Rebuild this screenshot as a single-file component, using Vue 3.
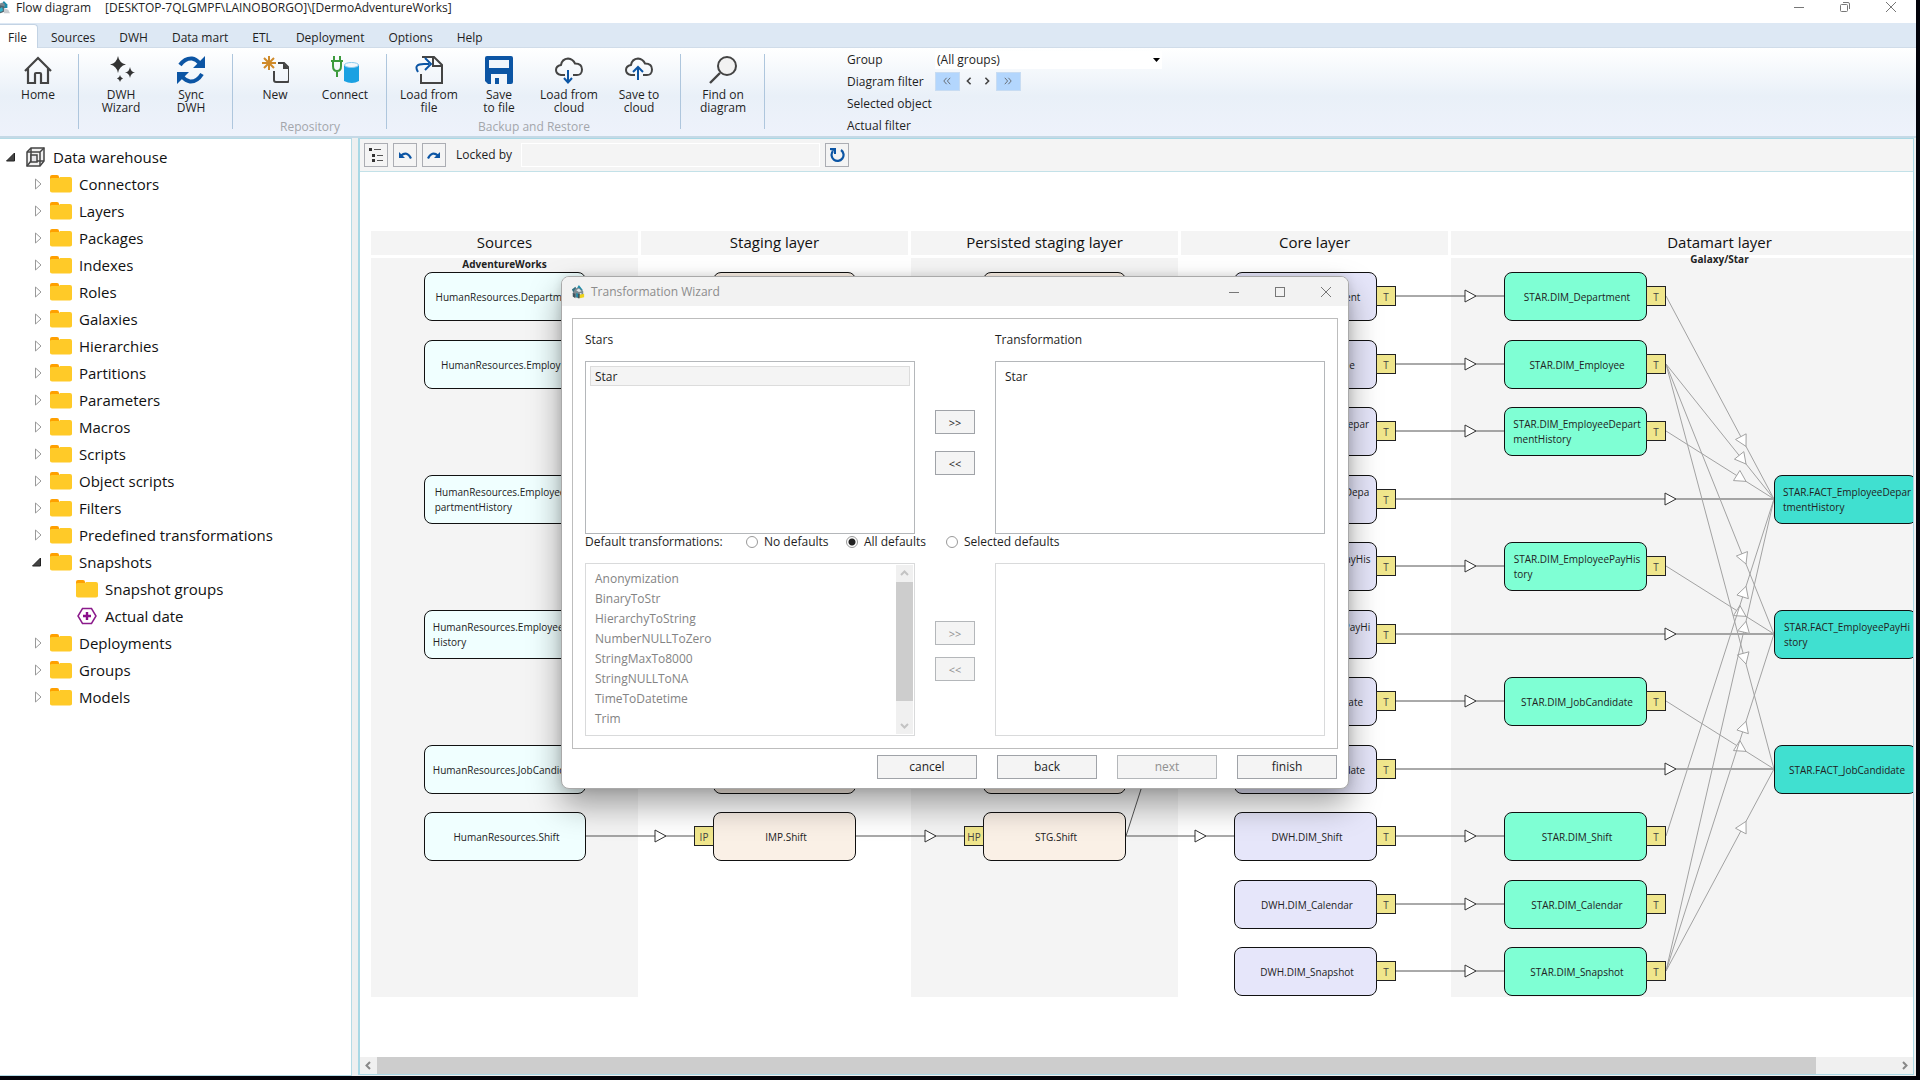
<script setup>
import { ref } from 'vue'

const tabs = ['File', 'Sources', 'DWH', 'Data mart', 'ETL', 'Deployment', 'Options', 'Help']

const ribbon = [
  { caption: '', items: [{ icon: 'home', lines: ['Home'] }] },
  { caption: '', items: [{ icon: 'wizard', lines: ['DWH', 'Wizard'] }, { icon: 'sync', lines: ['Sync', 'DWH'] }] },
  { caption: 'Repository', items: [{ icon: 'new', lines: ['New'] }, { icon: 'connect', lines: ['Connect'] }] },
  {
    caption: 'Backup and Restore',
    items: [
      { icon: 'load', lines: ['Load from', 'file'] },
      { icon: 'save', lines: ['Save', 'to file'] },
      { icon: 'clouddown', lines: ['Load from', 'cloud'] },
      { icon: 'cloudup', lines: ['Save to', 'cloud'] },
    ],
  },
  { caption: '', items: [{ icon: 'find', lines: ['Find on', 'diagram'] }] },
]

const tree = [
  { label: 'Data warehouse', level: 0, state: 'open', icon: 'cube' },
  ...['Connectors', 'Layers', 'Packages', 'Indexes', 'Roles', 'Galaxies', 'Hierarchies', 'Partitions', 'Parameters',
    'Macros', 'Scripts', 'Object scripts', 'Filters', 'Predefined transformations']
    .map((label) => ({ label, level: 1, state: 'closed', icon: 'folder' })),
  { label: 'Snapshots', level: 1, state: 'open', icon: 'folder' },
  { label: 'Snapshot groups', level: 2, state: '', icon: 'folder' },
  { label: 'Actual date', level: 2, state: '', icon: 'date' },
  ...['Deployments', 'Groups', 'Models'].map((label) => ({ label, level: 1, state: 'closed', icon: 'folder' })),
]

const layers = [
  { title: 'Sources', sub: 'AdventureWorks', shaded: true },
  { title: 'Staging layer', sub: '', shaded: false },
  { title: 'Persisted staging layer', sub: '', shaded: true },
  { title: 'Core layer', sub: '', shaded: false },
  { title: 'Datamart layer', sub: 'Galaxy/Star', shaded: true, wide: true },
]

/* Node geometry on the board: left edge and width per kind, row pitch 67.5 */
const kinds = {
  src: { x: 53, w: 162 },
  imp: { x: 342, w: 143, tag: 'IP' },
  stg: { x: 612, w: 143, tag: 'HP' },
  dwh: { x: 863, w: 143, tag: 'T' },
  dim: { x: 1133, w: 143, tag: 'T' },
  fact: { x: 1403, w: 143 },
}
const rowTop = (row) => Math.round(41 + 67.5 * row)
const rowMid = (row) => rowTop(row) + 24

const nodeList = {
  src: {
    0: ['HumanResources.Department'], 1: ['HumanResources.Employee'],
    3: ['HumanResources.EmployeeDe', 'partmentHistory'], 5: ['HumanResources.EmployeePay', 'History'],
    7: ['HumanResources.JobCandidate'], 8: ['HumanResources.Shift'],
  },
  imp: {
    0: ['IMP.Department'], 1: ['IMP.Employee'], 3: ['IMP.EmployeeDepartment', 'History'],
    5: ['IMP.EmployeePayHistory'], 7: ['IMP.JobCandidate'], 8: ['IMP.Shift'],
  },
  stg: {
    0: ['STG.Department'], 1: ['STG.Employee'], 3: ['STG.EmployeeDepartment', 'History'],
    5: ['STG.EmployeePayHistory'], 7: ['STG.JobCandidate'], 8: ['STG.Shift'],
  },
  dwh: {
    0: ['DWH.DIM_Department'], 1: ['DWH.DIM_Employee'], 2: ['DWH.DIM_EmployeeDepar', 'tmentHistory'],
    3: ['DWH.FACT_EmployeeDepa', 'rtmentHistory'], 4: ['DWH.DIM_EmployeePayHis', 'tory'],
    5: ['DWH.FACT_EmployeePayHi', 'story'], 6: ['DWH.DIM_JobCandidate'], 7: ['DWH.FACT_JobCandidate'],
    8: ['DWH.DIM_Shift'], 9: ['DWH.DIM_Calendar'], 10: ['DWH.DIM_Snapshot'],
  },
  dim: {
    0: ['STAR.DIM_Department'], 1: ['STAR.DIM_Employee'], 2: ['STAR.DIM_EmployeeDepart', 'mentHistory'],
    4: ['STAR.DIM_EmployeePayHis', 'tory'], 6: ['STAR.DIM_JobCandidate'], 8: ['STAR.DIM_Shift'],
    9: ['STAR.DIM_Calendar'], 10: ['STAR.DIM_Snapshot'],
  },
  fact: {
    3: ['STAR.FACT_EmployeeDepar', 'tmentHistory'], 5: ['STAR.FACT_EmployeePayHi', 'story'],
    7: ['STAR.FACT_JobCandidate'],
  },
}
const nodes = Object.entries(nodeList).flatMap(([kind, rows]) =>
  Object.entries(rows).map(([row, lines]) => {
    const k = kinds[kind]
    const left = kind === 'imp' || kind === 'stg'
    return { kind, lines, x: k.x, w: k.w, y: rowTop(+row), tag: k.tag, tagX: left ? k.x - 19 : k.x + k.w - 1 }
  }),
)

const edge = (x1, r1, x2, r2, back = 28, soft = false) => {
  const y1 = rowMid(r1)
  const y2 = rowMid(r2)
  const len = Math.hypot(x2 - x1, y2 - y1)
  const ux = (x2 - x1) / len
  const uy = (y2 - y1) / len
  const d = back / ux
  const tx = x2 - ux * d
  const ty = y2 - uy * d
  const bx = tx - ux * 11
  const by = ty - uy * 11
  const arrow = `${tx},${ty} ${bx - uy * 6},${by + ux * 6} ${bx + uy * 6},${by - ux * 6}`
  return { x1, y1, x2, y2, arrow, soft }
}
const edges = [
  edge(215, 8, 323, 8), edge(485, 8, 593, 8), edge(755, 8, 863, 8),
  ...[0, 1, 2, 4, 6, 8, 9, 10].map((r) => edge(1025, r, 1133, r)),
  ...[3, 5, 7].map((r) => edge(1025, r, 1403, r, 98)),
  ...[[0, 3], [1, 3], [2, 3], [1, 5], [1, 7], [4, 5], [6, 7], [8, 3], [10, 3], [10, 5], [10, 7]]
    .map(([a, b]) => edge(1295, a, 1403, b, 28, true)),
  edge(755, 8, 863, 3),
]

const defaults = ref('all')
const transformations = ['Anonymization', 'BinaryToStr', 'HierarchyToString', 'NumberNULLToZero', 'StringMaxTo8000',
  'StringNULLToNA', 'TimeToDatetime', 'Trim']
</script>

<template>
  <div class="screen">
    <div class="app">
      <header class="titlebar">
        <svg class="app-icon" viewBox="0 0 16 16"><path d="M6 5 9 1l4 4v4H6z" fill="#1c8ba8" /><circle cx="7" cy="6" r="3" fill="#7d8b94" /><path d="M1 9l3-3 5 1 1 6-5 2-4-2z" fill="#52656f" /><path d="M4 10l3-2 1 4-3 2z" fill="#35b4cc" /><path d="M9 15V9l5 2 2 4z" fill="#c8ccd0" /></svg>
        <span>Flow diagram</span>
        <span class="path">[DESKTOP-7QLGMPF\LAINOBORGO]\[DermoAdventureWorks]</span>
        <div class="winbtns">
          <button aria-label="Minimize"><svg viewBox="0 0 12 12"><path d="M1 6.500h10" /></svg></button>
          <button aria-label="Restore"><svg viewBox="0 0 12 12"><rect x="1.500" y="3.500" width="7" height="7" rx="1" /><path d="M4 1.500h5q1.500 0 1.500 1.500v5" /></svg></button>
          <button aria-label="Close"><svg viewBox="0 0 12 12"><path d="M1 1l10 10M11 1 1 11" /></svg></button>
        </div>
      </header>

      <nav class="tabs">
        <button v-for="(t, i) in tabs" :key="t" :class="{ active: i === 0 }">{{ t }}</button>
      </nav>

      <section class="ribbon">
        <div v-for="(g, gi) in ribbon" :key="gi" class="group">
          <div class="group-items">
            <button v-for="b in g.items" :key="b.icon" class="big">
              <svg v-if="b.icon === 'home'" viewBox="0 0 28 28"><path d="M1 15 14 2l13 13M4 12v15h7v-9q0-1 1-1h4q1 0 1 1v9h7V12" fill="none" stroke="#444" stroke-width="2.200" /></svg>
              <svg v-else-if="b.icon === 'wizard'" viewBox="0 0 28 28"><path d="M11 0q1.200 7 8 8.500-6.800 1.500-8 8.500-1.200-7-8-8.500Q9.800 7 11 0zM23 11q.8 5 5 5.500-4.200.5-5 5.500-.8-5-5-5.500 4.200-.5 5-5.500zM13 19q.5 3 3 3.500-2.500.5-3 3.500-.5-3-3-3.500 2.500-.5 3-3.500z" fill="#333" /></svg>
              <svg v-else-if="b.icon === 'sync'" viewBox="0 0 28 28"><g fill="none" stroke="#0c55a4" stroke-width="4"><path d="M3 9Q8 2 15 2.500q4 .5 8 5M25 18q-5 8-12 7.500-4-.5-8-5" /></g><path d="M28 0v12H16zM0 28V16h12z" fill="#0c55a4" /></svg>
              <svg v-else-if="b.icon === 'new'" viewBox="0 0 28 28"><path d="M8 0v14M1 7h14M3 2l10 10M13 2 3 12" stroke="#cf8a2a" stroke-width="2" /><path d="M17 7h6l5 5v12q0 2-2 2H15q-2 0-2-2v-9" fill="none" stroke="#444" stroke-width="2" /><path d="M22 7v6h6z" fill="#444" /></svg>
              <svg v-else-if="b.icon === 'connect'" viewBox="0 0 28 28"><path d="M3 0v5M9 0v5M0 5h12M2 5v5q0 5 4 5t4-5V5M6 15v6" fill="none" stroke="#3c9a3c" stroke-width="2" /><path d="M13 9q7-4 15 0v16q-7 4-15 0z" fill="#1ba1e2" /><ellipse cx="20.500" cy="9" rx="7" ry="2.500" fill="#f4f8fc" stroke="#8ccbee" /></svg>
              <svg v-else-if="b.icon === 'load'" viewBox="0 0 28 28"><path d="M7 1h12l8 8v18H6V18M18 1v9h9" fill="none" stroke="#444" stroke-width="2" /><path d="M3 16q-5-8 6-8h5M10 2l6 6-6 6" fill="none" stroke="#0c55a4" stroke-width="2" /></svg>
              <svg v-else-if="b.icon === 'save'" viewBox="0 0 28 28"><path d="M2 0h24q2 0 2 2v24q0 2-2 2H3l-3-3V2q0-2 2-2z" fill="#0c55a4" /><path d="M4 4h20v8H4zM6 18h16v10H6z" fill="#f2f6fb" /><path d="M10 22h4v6h-4z" fill="#0c55a4" /></svg>
              <svg v-else-if="b.icon.startsWith('cloud')" viewBox="0 0 28 28"><path d="M10 19H6q-5-1-5-5t5-5q1-6 7-6.500 5 .5 7 5 7 0 7 6t-6 5.500h-3" fill="none" stroke="#444" stroke-width="2" /><path v-if="b.icon === 'clouddown'" d="M13 14v12M9 22l4 4.500 4-4.500" fill="none" stroke="#0c55a4" stroke-width="2" /><path v-else d="M13 24V11M8 16l5-5 5 5" fill="none" stroke="#0c55a4" stroke-width="2" /></svg>
              <svg v-else viewBox="0 0 28 28"><circle cx="18" cy="10" r="9" fill="#f2f2f2" stroke="#444" stroke-width="2" /><path d="M11 17 1 27" stroke="#444" stroke-width="2.400" /></svg>
              <span v-for="l in b.lines" :key="l">{{ l }}</span>
            </button>
          </div>
          <div class="caption">{{ g.caption }}</div>
        </div>

        <div class="filters">
          <label for="group">Group</label>
          <div class="combo">
            <select id="group"><option>(All groups)</option></select>
            <svg viewBox="0 0 8 4"><path d="M0 0h7L3.500 4z" /></svg>
          </div>
          <span>Diagram filter</span>
          <div class="steps">
            <button class="hot" aria-label="First"><svg viewBox="0 0 12 10"><path d="M5.500 1 2 5l3.500 4M10 1 6.500 5 10 9" /></svg></button>
            <button aria-label="Previous"><svg viewBox="0 0 12 10" class="bold"><path d="M8 1 4 5l4 4" /></svg></button>
            <button aria-label="Next"><svg viewBox="0 0 12 10" class="bold"><path d="M4 1l4 4-4 4" /></svg></button>
            <button class="hot" aria-label="Last"><svg viewBox="0 0 12 10"><path d="M2 1l3.500 4L2 9M6.500 1 10 5 6.500 9" /></svg></button>
          </div>
          <span>Selected object</span><span></span>
          <span>Actual filter</span><span></span>
        </div>
      </section>

      <main class="work">
        <aside class="tree">
          <ul>
            <li v-for="n in tree" :key="n.label" :class="'level' + n.level">
              <svg class="twist" viewBox="0 0 24 24"><path v-if="n.state === 'open'" d="M14.500 8v8h-8z" fill="#444" stroke="#222" /><path v-else-if="n.state === 'closed'" d="M9.500 7v10l5.500-5z" fill="#fff" stroke="#999" /></svg>
              <svg v-if="n.icon === 'folder'" class="ticon" viewBox="0 0 22 18"><path d="M0 6V2q0-2 2-2h5q2 0 2 2v4z" fill="#ffa000" /><path d="M0 4q0-1 2-1h7l1-1h10q2 0 2 2v12q0 1-2 1.500H2Q0 17 0 16z" fill="#ffca28" /></svg>
              <svg v-else-if="n.icon === 'cube'" class="ticon cube" viewBox="0 0 22 20"><g fill="#f1f1f1" stroke="#444" stroke-width="1.500"><path d="M3 5 7 1h13v13l-4 5H3z" /><path d="M3 5h13v14M16 5l4-4M7 1v13h13M7 14l-4 5" fill="none" /><path d="M7 8h6v7H7z" fill="#e6e6ea" /></g></svg>
              <svg v-else class="ticon cube" viewBox="0 0 22 20"><path d="M6.500 2.500h9L20 10l-4.500 7.500h-9L2 10z" fill="#fff" stroke="#8b1a8b" stroke-width="1.500" /><path d="M11 6v8M7 10h8" stroke="#8b0f8b" stroke-width="2.400" /></svg>
              <span>{{ n.label }}</span>
            </li>
          </ul>
        </aside>

        <section class="panel">
          <div class="toolbar">
            <button aria-label="Layout"><svg viewBox="0 0 16 16"><path d="M1 1h3v3H1zM4 7h3v3H4zM4 12h3v3H4z" fill="#333" /><path d="M6 2.500h7M9 8.500h6M9 13.500h6" stroke="#555" /></svg></button>
            <button aria-label="Undo"><svg viewBox="0 0 16 16"><path d="M4 8.500q6-5 10 3" fill="none" stroke="#0c55a4" stroke-width="2.200" /><path d="M2 5v6h6z" fill="#0c55a4" /></svg></button>
            <button aria-label="Redo"><svg viewBox="0 0 16 16"><path d="M12 8.500q-6-5-10 3" fill="none" stroke="#0c55a4" stroke-width="2.200" /><path d="M14 5v6H8z" fill="#0c55a4" /></svg></button>
            <label for="locked">Locked by</label>
            <input id="locked" type="text" readonly />
            <button aria-label="Refresh"><svg viewBox="0 0 16 16"><path d="M4 4a6 6 0 1 0 8-1" fill="none" stroke="#0c55a4" stroke-width="2.200" /><path d="M1 1h6v6H5V4L1 3z" fill="#0c55a4" /></svg></button>
          </div>

          <div class="canvas">
            <div class="board">
              <div v-for="l in layers" :key="l.title" class="layer">
                <h2>{{ l.title }}</h2>
                <div :class="['lane', { shaded: l.shaded, wide: l.wide }]">{{ l.sub }}</div>
              </div>
              <svg class="edges" width="1617" height="766">
                <g v-for="(e, i) in edges" :key="i" :class="{ soft: e.soft }">
                  <line :x1="e.x1" :y1="e.y1" :x2="e.x2" :y2="e.y2" />
                  <polygon :points="e.arrow" />
                </g>
              </svg>
              <template v-for="n in nodes" :key="n.kind + n.y">
                <div :class="['node', n.kind]" :style="{ left: n.x + 'px', top: n.y + 'px', width: n.w + 'px' }">
                  <div><template v-for="(l, i) in n.lines" :key="l"><br v-if="i" />{{ l }}</template></div>
                </div>
                <div v-if="n.tag" class="tag" :style="{ left: n.tagX + 'px', top: n.y + 14 + 'px' }">{{ n.tag }}</div>
              </template>
            </div>
          </div>

          <div class="hscroll">
            <svg viewBox="0 0 17 17"><path d="M10 5 6.500 8.500 10 12" /></svg>
            <div class="track"><div class="thumb"></div></div>
            <svg viewBox="0 0 17 17"><path d="M7 5l3.500 3.500L7 12" /></svg>
          </div>
        </section>
      </main>

      <div class="dialog" role="dialog" aria-label="Transformation Wizard">
        <header class="dlg-title">
          <svg class="app-icon" viewBox="0 0 16 16"><path d="M6 5 9 0l4 5v4H6z" fill="#1c8ba8" /><path d="M1 5l4-3 2 4-4 3z" fill="#2f6f80" /><path d="M2 9l3-5 4-1 5 4v6l-6 2-5-2z" fill="#7c8a92" /><path d="M6 6l3-2 3 3-3 1zM10 9h2v2h-2z" fill="#dfe4e7" /><path d="M2 9l3 1v5l-3-2zM8 10h2v5H8z" fill="#41545e" /><path d="M6 9l2 1v4H6z" fill="#1c8ba8" /><path d="M10 15v-4l5-1v4z" fill="#efd41c" /></svg>
          <span>Transformation Wizard</span>
          <div class="winbtns">
            <button aria-label="Minimize"><svg viewBox="0 0 12 12"><path d="M1 6.500h10" /></svg></button>
            <button aria-label="Maximize"><svg viewBox="0 0 12 12"><rect x="1.500" y="1.500" width="9" height="9" /></svg></button>
            <button aria-label="Close"><svg viewBox="0 0 12 12"><path d="M1 1l10 10M11 1 1 11" /></svg></button>
          </div>
        </header>
        <div class="dlg-body">
          <div class="transfer">
            <label for="stars">Stars</label>
            <span></span>
            <label for="picked">Transformation</label>
            <div class="list">
              <select id="stars" multiple><option class="hot">Star</option></select>
            </div>
            <div class="move">
              <button>&gt;&gt;</button>
              <button>&lt;&lt;</button>
            </div>
            <div class="list">
              <select id="picked" multiple><option>Star</option></select>
            </div>
          </div>
          <div class="choices">
            <span>Default transformations:</span>
            <label><input v-model="defaults" type="radio" value="no" />No defaults</label>
            <label><input v-model="defaults" type="radio" value="all" />All defaults</label>
            <label><input v-model="defaults" type="radio" value="selected" />Selected defaults</label>
          </div>
          <div class="transfer off">
            <div class="list">
              <select multiple disabled aria-label="Available transformations">
                <option v-for="t in transformations" :key="t">{{ t }}</option>
              </select>
              <div class="vscroll">
                <svg viewBox="0 0 17 17"><path d="M5 10l3.500-3.500L12 10" /></svg>
                <div class="thumb"></div>
                <svg viewBox="0 0 17 17"><path d="M5 7l3.500 3.500L12 7" /></svg>
              </div>
            </div>
            <div class="move tight">
              <button disabled>&gt;&gt;</button>
              <button disabled>&lt;&lt;</button>
            </div>
            <div class="list"><select multiple disabled aria-label="Selected transformations"></select></div>
          </div>
        </div>
        <footer class="dlg-foot">
          <button>cancel</button>
          <button>back</button>
          <button disabled>next</button>
          <button>finish</button>
        </footer>
      </div>
    </div>
  </div>
</template>

<style>
body {
  margin: 0;
  background: #03030a;
}
</style>

<style scoped>
.screen {
  box-sizing: border-box;
  height: 100vh;
  padding: 0 4px 4px 0;
  background: #03030a;
  font: 12px/16px 'Open Sans', 'Noto Sans', sans-serif;
  color: #1e1e1e;
}
* {
  box-sizing: border-box;
}
button,
select,
input {
  font: inherit;
  color: inherit;
  margin: 0;
  padding: 0;
  border: 0;
  border-radius: 0;
  background: none;
}
.app {
  position: relative;
  display: flex;
  flex-direction: column;
  height: 100%;
  overflow: hidden;
  background: #fff;
}

/* title bar */
.titlebar {
  display: flex;
  height: 23px;
  flex: none;
  padding-right: 18px;
}
.app-icon {
  width: 14px;
  height: 14px;
  flex: none;
}
.titlebar .app-icon {
  margin: 0 6px 0 -4px;
}
.path {
  margin-left: 14px;
}
.winbtns {
  display: flex;
  gap: 33px;
  margin-left: auto;
}
.winbtns button {
  width: 13px;
  height: 13px;
}
.winbtns svg {
  display: block;
  width: 12px;
  height: 12px;
  fill: none;
  stroke: #777;
}

/* ribbon */
.tabs {
  display: flex;
  flex: none;
  gap: 3px;
  height: 25px;
  padding-top: 1px;
  background: #dde8f4;
  border-bottom: 1px solid #d0dce9;
}
.tabs button {
  padding: 3px 11px 0 10px;
  height: 24px;
}
.tabs .active {
  padding: 2px 10px 0 8px;
  background: #fff;
  border: 1px solid #c3d3e4;
  border-width: 1px 1px 0 0;
  border-radius: 0 4px 0 0;
}
.ribbon {
  display: flex;
  flex: none;
  height: 90px;
  padding-top: 6px;
  background: linear-gradient(#fff, #e9f0f8 55%, #eef2fb);
  border-bottom: 2px solid #c5d9e6;
}
.group {
  height: 75px;
  padding: 0 6px 0 7px;
  border-right: 1px solid #aec6dd;
}
.group:first-child {
  padding: 0 5px 0 3px;
}
.group-items {
  display: flex;
  height: 65px;
}
.big {
  display: flex;
  flex-direction: column;
  align-items: center;
  width: 70px;
  padding-top: 2px;
  line-height: 13px;
}
.big svg {
  width: 28px;
  height: 28px;
  margin-bottom: 4px;
}
.caption {
  line-height: 16px;
  text-align: center;
  color: #a3a6ab;
}
.filters {
  display: grid;
  grid-template-columns: 88px auto;
  grid-auto-rows: 22px;
  align-items: center;
  margin: -5px 0 0 82px;
}
.combo {
  display: flex;
  align-items: center;
  width: 227px;
  height: 18px;
  padding-right: 1px;
  background: #fff;
}
.combo select {
  flex: 1;
  appearance: none;
  padding-left: 2px;
}
.combo svg {
  width: 8px;
  height: 4px;
}
.steps {
  display: flex;
  padding-bottom: 2px;
}
.steps button {
  width: 18px;
  height: 19px;
  padding: 0 3px;
}
.steps .hot {
  width: 25px;
  background: #b3d6fd;
  border: 1px solid #c8dcf2;
  padding: 0 5px;
}
.steps svg {
  display: block;
  width: 12px;
  height: 8px;
  fill: none;
  stroke: #555;
}
.steps .bold {
  stroke: #444;
  stroke-width: 2;
}

/* work area */
.work {
  display: flex;
  flex: 1;
  min-height: 0;
  background: #eeeff0;
}
.tree {
  width: 352px;
  flex: none;
  background: #fff;
  border: 1px solid #b5dbe6;
  border-left: 0;
}
.tree ul {
  margin: 0;
  padding: 4px 0 0;
  list-style: none;
}
.tree li {
  display: flex;
  align-items: center;
  height: 27px;
  font-size: 15px;
  color: #111;
}
.level1 {
  padding-left: 26px;
}
.level2 {
  padding-left: 52px;
}
.twist {
  width: 24px;
  height: 24px;
}
.ticon {
  width: 22px;
  height: 18px;
  margin-right: 7px;
}
.cube {
  height: 20px;
}
.panel {
  display: flex;
  flex-direction: column;
  flex: 1;
  min-width: 0;
  margin: 0 2px 1px 6px;
  border: 1px solid #a9d8e5;
  border-left-width: 2px;
  background: #fff;
}
.toolbar {
  display: flex;
  flex: none;
  align-items: center;
  height: 33px;
  gap: 5px;
  padding: 0 4px;
  background: #f4f4f4;
  border-bottom: 1px solid #c3e1e8;
}
.toolbar button {
  display: flex;
  align-items: center;
  justify-content: center;
  width: 24px;
  height: 24px;
  border: 1px solid #abadb3;
  background: #f4f4f4;
}
.toolbar svg {
  width: 16px;
  height: 16px;
}
.toolbar label {
  margin: 0 4px 0 5px;
}
.toolbar input {
  width: 299px;
  height: 24px;
  border: 1px solid #fff;
  background: #f4f4f4;
}
.canvas {
  flex: 1;
  min-height: 0;
  overflow: hidden;
  padding: 59px 0 0 11px;
}
.board {
  position: relative;
  display: grid;
  grid-template-columns: repeat(4, 267px) 537px;
  gap: 3px;
  width: 1617px;
}
.layer h2 {
  margin: 0 0 3px;
  padding-bottom: 2px;
  background: #f4f4f4;
  font-weight: 400;
  font-size: 15px;
  line-height: 22px;
  text-align: center;
  color: #111;
}
.lane {
  height: 739px;
  font-size: 10px;
  line-height: 12px;
  font-weight: 700;
  text-align: center;
  color: #222;
}
.lane.shaded {
  background: #f4f4f4;
}
.lane.wide {
  line-height: 2px;
}
.edges {
  position: absolute;
  left: 0;
  top: 0;
  fill: none;
  stroke: #555;
}
.edges polygon {
  fill: #fff;
  stroke: #333;
}
.edges .soft line,
.edges .soft polygon {
  stroke: #a2a2a2;
}
.node {
  position: absolute;
  display: flex;
  align-items: center;
  justify-content: center;
  height: 49px;
  padding: 1px 0 0 3px;
  border: 1px solid #111;
  border-radius: 8px;
  font-size: 10px;
  line-height: 15px;
  white-space: nowrap;
  color: #222;
}
.src {
  background: #f0ffff;
}
.imp,
.stg {
  background: #faf0e6;
}
.dwh {
  background: #e6e6fa;
}
.dim {
  background: #7fffd4;
}
.fact {
  background: #40e0d0;
}
.tag {
  position: absolute;
  width: 20px;
  height: 20px;
  border: 1px solid #222;
  background: #f0e68c;
  font-size: 10px;
  line-height: 20px;
  text-align: center;
  color: #444;
}
.hscroll {
  display: flex;
  flex: none;
  height: 17px;
  background: #f0f0f0;
}
.hscroll svg,
.vscroll svg {
  width: 17px;
  height: 17px;
  fill: none;
  stroke: #888;
  stroke-width: 2;
}
.track {
  flex: 1;
}
.thumb {
  background: #cdcdcd;
}
.hscroll .thumb {
  width: calc(95% - 4px);
  height: 17px;
}

/* wizard */
.dialog {
  position: absolute;
  left: 561px;
  top: 276px;
  width: 788px;
  border: 1px solid #a9a9a9;
  border-radius: 8px;
  background: #fff;
  overflow: hidden;
  box-shadow: 0 16px 32px rgba(0, 0, 0, 0.36), 0 0 10px rgba(0, 0, 0, 0.12);
}
.dlg-title {
  display: flex;
  align-items: center;
  height: 29px;
  padding: 0 15px 0 9px;
  gap: 6px;
  background: #f2f2f2;
  color: #8c8c8c;
}
.dlg-body {
  margin: 12px 10px 0;
  padding: 13px 12px 12px;
  border: 1px solid #bdbdbd;
}
.transfer {
  display: grid;
  grid-template-columns: 330px 1fr 330px;
}
.transfer label {
  height: 29px;
}
.list {
  display: flex;
  height: 173px;
  border: 1px solid #b4b7ba;
}
.list select {
  flex: 1;
  padding: 4px;
  overflow: hidden;
  outline: 0;
}
.list option {
  height: 20px;
  min-height: 20px;
  padding: 1px 4px 0;
  border: 1px solid transparent;
  line-height: 18px;
}
.list option.hot {
  background: #f4f4f4;
  border-color: #dcdcdc;
}
.move {
  display: flex;
  flex-direction: column;
  align-items: center;
  gap: 17px;
  padding-top: 49px;
}
.move button {
  width: 40px;
  height: 24px;
  padding-top: 2px;
  font-size: 11px;
}
.move.tight {
  gap: 12px;
  padding-top: 58px;
}
.move button,
.dlg-foot button {
  border: 1px solid #a0a3a8;
  background: #f4f4f4;
}
.choices {
  display: flex;
  align-items: center;
  height: 29px;
  padding-bottom: 14px;
}
.choices span {
  width: 161px;
}
.choices label {
  display: flex;
  align-items: center;
  width: 100px;
  gap: 6px;
  white-space: nowrap;
}
.choices input {
  appearance: none;
  flex: none;
  width: 12px;
  height: 12px;
  border: 1px solid #999;
  border-radius: 50%;
  background: #fff;
}
.choices input:checked {
  background: radial-gradient(#222 3px, #fff 4px);
}
.off .list {
  border-color: #d9dadb;
}
.off option,
.off select {
  color: #838383;
  opacity: 1;
}
.vscroll {
  display: flex;
  flex-direction: column;
  width: 17px;
  margin: 1px;
  background: #f0f0f0;
}
.vscroll svg {
  stroke: #c3c3c3;
}
.vscroll .thumb {
  height: 119px;
  margin-bottom: auto;
}
.dlg-foot {
  display: flex;
  justify-content: flex-end;
  gap: 20px;
  padding: 6px 11px 9px;
}
.dlg-foot button {
  width: 100px;
  height: 24px;
}
.dlg-foot button:disabled,
.move button:disabled {
  color: #909090;
  border-color: #b4b7ba;
}
</style>
